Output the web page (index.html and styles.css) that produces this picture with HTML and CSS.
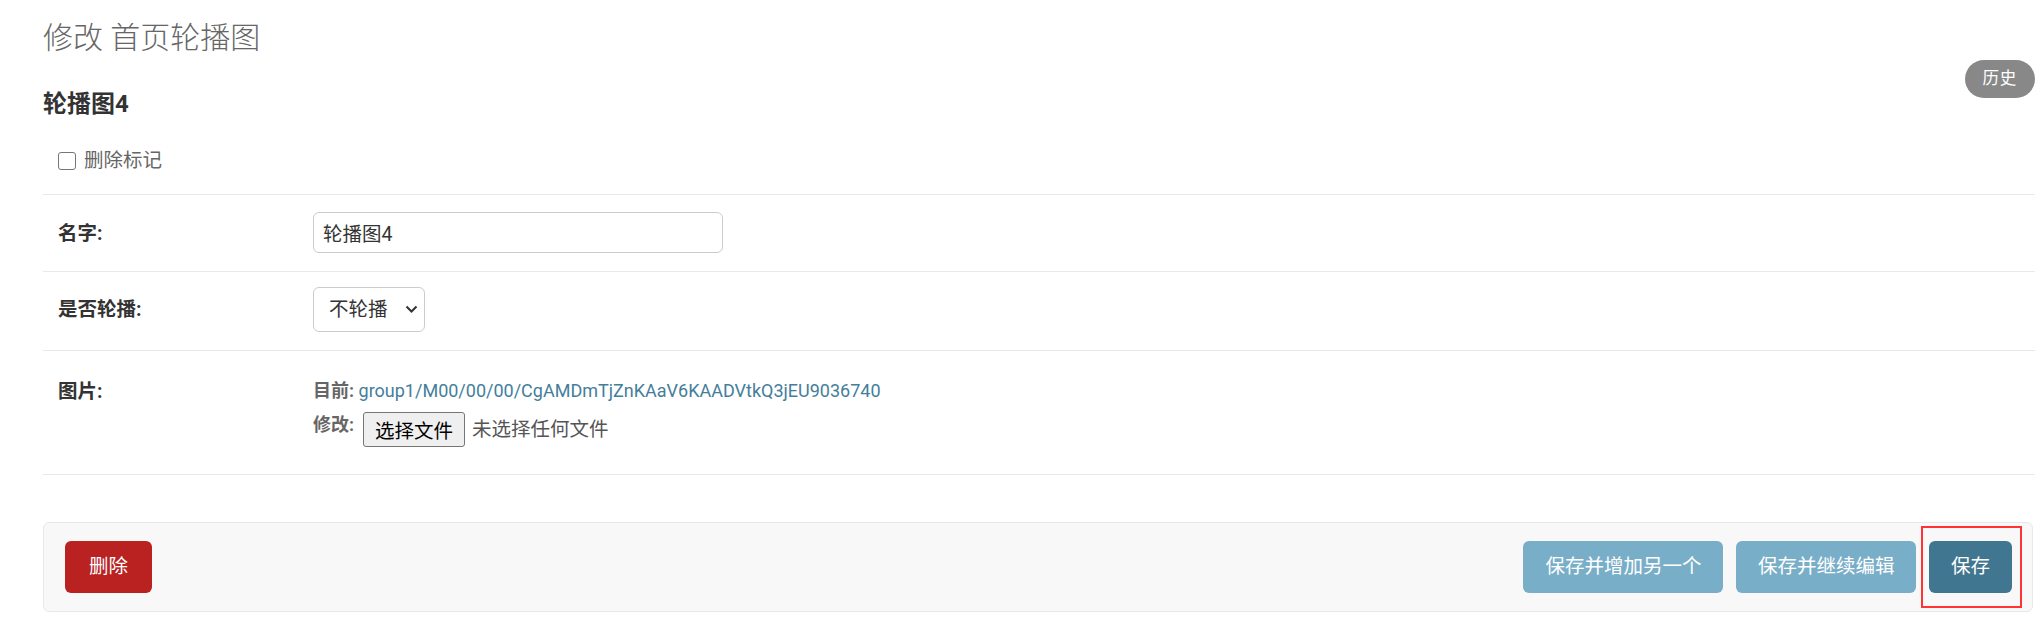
FILE: index.html
```html
<!DOCTYPE html>
<html lang="zh-CN">
<head>
<meta charset="utf-8">
<title>修改 首页轮播图</title>
<link rel="stylesheet" href="styles.css">
</head>
<body>
<div class="page">
  <h1 class="title">修改 首页轮播图</h1>
  <div class="object-head">
    <h2 class="subtitle">轮播图4</h2>
    <a class="history" href="#">历史</a>
  </div>
  <div class="delete-mark">
    <input type="checkbox" class="check" id="is_delete">
    <label for="is_delete" class="check-label">删除标记</label>
  </div>
  <div class="fieldset">
    <div class="form-row">
      <label class="field-label label-name">名字:</label>
      <div class="field"><input class="text-input" type="text" value="轮播图4"></div>
    </div>
    <div class="form-row">
      <label class="field-label label-select">是否轮播:</label>
      <div class="field">
        <div class="select-wrap">
          <select class="select"><option>不轮播</option></select>
          <svg class="chevron" width="13" height="8" viewBox="0 0 13 8"><path d="M1.5 1.5 L6.5 6.5 L11.5 1.5" fill="none" stroke="#333" stroke-width="2"/></svg>
        </div>
      </div>
    </div>
    <div class="form-row">
      <label class="field-label label-file">图片:</label>
      <div class="field file-upload">
        <div class="file-line"><span class="file-key">目前:</span> <a class="file-link" href="#">group1/M00/00/00/CgAMDmTjZnKAaV6KAADVtkQ3jEU9036740</a></div>
        <div class="file-line file-change">
          <span class="file-key change-key">修改:</span>
          <button class="file-btn" type="button">选择文件</button>
          <span class="file-none">未选择任何文件</span>
        </div>
      </div>
    </div>
  </div>
  <div class="submit-row">
    <a class="btn btn-delete" href="#">删除</a>
    <div class="save-group">
      <button class="btn btn-light" type="button">保存并增加另一个</button>
      <button class="btn btn-light" type="button">保存并继续编辑</button>
      <span class="marked"><button class="btn btn-default" type="button">保存</button></span>
    </div>
  </div>
</div>
</body>
</html>
```
FILE: styles.css
```css
* { box-sizing: border-box; }
body {
  margin: 0;
  background: #fff;
  font-family: Roboto, "Noto Sans CJK SC", sans-serif;
  color: #333;
}
.page {
  padding: 0 8px 0 43px;
}
.title {
  margin: 20px 0 0;
  font-size: 30px;
  line-height: 36px;
  font-weight: 300;
  color: #666;
}
.object-head {
  display: flex;
  justify-content: space-between;
  align-items: flex-start;
  margin-top: 4px;
}
.subtitle {
  margin: 29px 0 0;
  font-size: 24px;
  line-height: 30px;
  font-weight: 700;
  color: #333;
}
.history {
  display: block;
  height: 38px;
  line-height: 38px;
  padding: 0 18px;
  border-radius: 19px;
  background: #888;
  color: #fff;
  font-size: 16.5px;
  letter-spacing: 0.75px;
  text-decoration: none;
}
.delete-mark {
  margin-top: 9px;
  padding: 15px;
  display: flex;
  align-items: center;
  gap: 8px;
  line-height: 36px;
}
.check {
  appearance: none;
  -webkit-appearance: none;
  margin: 0;
  width: 18px;
  height: 18px;
  border: 1.5px solid #767676;
  border-radius: 3px;
  background: #fff;
}
.check-label {
  font-size: 19.5px;
  color: #666;
}
.fieldset {
  border-bottom: 1px solid #e8e8e8;
}
.form-row {
  display: flex;
  align-items: flex-start;
  padding: 15px 15px 18px;
  border-top: 1px solid #e8e8e8;
}
.field-label {
  flex: 0 0 255px;
  padding-right: 15px;
  font-size: 19.5px;
  font-weight: 700;
  color: #333;
  line-height: 30px;
  padding-top: 9px;
}
.label-select { padding-top: 8px; }
.label-file { padding-top: 11px; }
.field {
  flex: 1;
}
.text-input {
  display: block;
  margin-top: 2px;
  width: 410px;
  height: 41px;
  padding: 0 9px;
  border: 1px solid #ccc;
  border-radius: 6px;
  font-family: inherit;
  font-size: 19.5px;
  color: #333;
  background: #fff;
}
.select-wrap {
  position: relative;
  width: 112px;
}
.select {
  appearance: none;
  -webkit-appearance: none;
  display: block;
  width: 112px;
  height: 45px;
  padding: 0 0 0 15px;
  border: 1px solid #ccc;
  border-radius: 6px;
  background: #fff;
  font-family: inherit;
  font-size: 19.5px;
  color: #333;
}
.chevron {
  position: absolute;
  right: 7px;
  top: 18px;
}
.file-upload {
  padding-top: 10px;
  padding-bottom: 9px;
}
.file-line {
  line-height: 30px;
  font-size: 18px;
  color: #666;
}
.file-key {
  font-weight: 700;
  color: #666;
}
.file-link {
  color: #447e9b;
  text-decoration: none;
}
.file-change {
  display: flex;
  align-items: flex-start;
  margin-top: 6px;
}
.change-key {
  line-height: 26px;
  margin-right: 9px;
}
.file-btn {
  height: 35px;
  padding: 0 11px;
  border: 1px solid #767676;
  border-radius: 3px;
  background: #efefef;
  font-family: inherit;
  font-size: 19.5px;
  color: #000;
}
.file-none {
  margin-left: 7px;
  font-size: 19.5px;
  line-height: 35px;
  color: #555;
}
.submit-row {
  margin: 47px 2px 0 0;
  display: flex;
  align-items: center;
  justify-content: space-between;
  padding: 18px 20px 18px 21px;
  background: #f8f8f8;
  border: 1px solid #e8e8e8;
  border-radius: 6px;
}
.save-group {
  display: flex;
  gap: 12.5px;
}
.btn {
  display: block;
  height: 52px;
  line-height: 52px;
  padding: 0 22px;
  border: 0;
  border-radius: 6px;
  font-family: inherit;
  font-size: 19.5px;
  color: #fff;
  text-decoration: none;
}
.btn-delete { background: #ba2121; padding: 0 24px; }
.btn-light { background: #79aec8; }
.btn-default { background: #417690; }
.marked {
  position: relative;
  display: block;
}
.marked::after {
  content: "";
  position: absolute;
  left: -8px;
  right: -10px;
  top: -15px;
  bottom: -15px;
  border: 2px solid #f33;
}
```
